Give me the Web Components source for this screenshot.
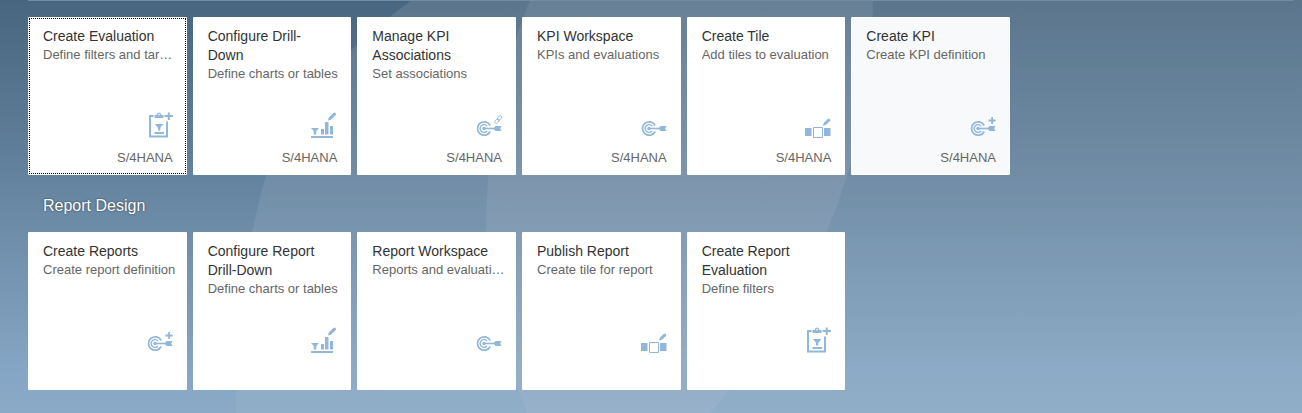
<!DOCTYPE html>
<html lang="en">
<head>
<meta charset="utf-8">
<title>Launchpad</title>
<style>
html, body { margin: 0; min-height: 100%; }
body { font-family: "Liberation Sans", Arial, sans-serif; background: #93b0ca; }
</style>
</head>
<body>
<launch-pad>
  <tile-group>
    <app-tile focused icon="board" system="S/4HANA" subtitle="Define filters and tar…">Create Evaluation</app-tile>
    <app-tile icon="chart" system="S/4HANA" subtitle="Define charts or tables">Configure Drill-Down</app-tile>
    <app-tile icon="target-link" system="S/4HANA" subtitle="Set associations">Manage KPI Associations</app-tile>
    <app-tile icon="target" system="S/4HANA" subtitle="KPIs and evaluations">KPI Workspace</app-tile>
    <app-tile icon="tiles" system="S/4HANA" subtitle="Add tiles to evaluation">Create Tile</app-tile>
    <app-tile hovered icon="target-plus" system="S/4HANA" subtitle="Create KPI definition">Create KPI</app-tile>
  </tile-group>
  <tile-group heading="Report Design">
    <app-tile icon="target-plus" subtitle="Create report definition">Create Reports</app-tile>
    <app-tile icon="chart" subtitle="Define charts or tables">Configure Report Drill-Down</app-tile>
    <app-tile icon="target" subtitle="Reports and evaluati…">Report Workspace</app-tile>
    <app-tile icon="tiles" subtitle="Create tile for report">Publish Report</app-tile>
    <app-tile icon="board" subtitle="Define filters">Create Report Evaluation</app-tile>
  </tile-group>
</launch-pad>
<script>
const target = '<g fill="none" stroke="currentColor"><path d="M15.200 13.500A6.700 6.700 0 1 0 15.200 19.500" stroke-width="1.700"/><path d="M12 14A3.900 3.900 0 1 0 12 19" stroke-width="1.400"/><path d="M9 16.500H21" stroke-width="1.600"/></g><circle cx="9" cy="16.500" r="1.700"/><path d="M18.500 16.500L20.500 14H26.500L25.200 16.500L26.500 19H20.500Z"/>';
const icons = {
  board: '<g fill="none" stroke="currentColor"><path d="M7.500 4H4V24.500H21V9.500" stroke-width="2"/><path d="M18.500 4H27M22.800 0.500V8" stroke-width="2"/><path d="M8.500 21H18" stroke-width="2"/></g><path d="M8.500 6V3H10.500Q11 .5 13 .5T15.500 3H17.500V6Z"/><circle cx="13" cy="2.600" r=".8" fill="#fff"/><path d="M8.800 12H17.500L14.300 15.800V18.500H12V15.800Z"/>',
  chart: '<path d="M1 24H23V26H1ZM1 16H9L6.300 19V22.500H3.700V19ZM11 17H14V22.500H11ZM15 10H18.500V22.500H15ZM20 14H23V22.500H20ZM18 8.500L18.800 5.500L23.500 .8H25.500L26.200 2.500L21 7.800Z"/>',
  target: target,
  'target-plus': target + '<path d="M22.200 5H24V7.600H26.600V9.400H24V12H22.200V9.400H19.500V7.600H22.200Z"/>',
  'target-link': target + '<g fill="none" stroke="currentColor" stroke-width=".9"><rect x="19.500" y="7.500" width="5" height="3" rx="1.500" transform="rotate(-50 22 9)"/><rect x="22" y="4.500" width="5" height="3" rx="1.500" transform="rotate(-50 24.500 6)"/></g>',
  tiles: '<path d="M1 16H7.500V24H1ZM20 16H26.500V24H20ZM19 13.500L19.800 10.800L24 6.800H25.800L26.500 8.500L21.800 12.900Z"/><path d="M9.500 15.500H18.500V25.500H9.500Z" fill="none" stroke="currentColor"/>'
};

customElements.define('launch-pad', class extends HTMLElement {
  constructor() {
    super();
    this.attachShadow({mode: 'open'}).innerHTML = `
      <style>
        :host { display: block; position: relative; isolation: isolate; overflow: hidden; min-height: 100vh; box-sizing: border-box; padding: 0 8px 23px 28px; background: linear-gradient(#48667f, #5e7d98 35%, #85a6c4 90%, #8aaac8); }
        .backdrop { position: absolute; inset: 0; z-index: -1; width: 100%; height: 100%; }
        .rule { height: 1px; margin-bottom: 16px; background: #6f8da3; }
      </style>
      <svg class="backdrop" viewBox="0 0 1302 413" preserveAspectRatio="xMinYMin slice" aria-hidden="true">
        <path d="M412 0Q300 80 266 175Q236 280 236 413H1302V0Z" fill="#b8c4cf" fill-opacity=".17"/>
        <path d="M530 0Q486 110 486 232Q488 320 527 413H710Q873 230 873 0Z" fill="#c0c5d8" fill-opacity=".14"/>
      </svg>
      <div class="rule"></div>
      <main><slot></slot></main>`;
  }
});

customElements.define('tile-group', class extends HTMLElement {
  constructor() {
    super();
    const heading = this.getAttribute('heading');
    this.attachShadow({mode: 'open'}).innerHTML = `
      <style>
        :host { display: block; }
        h2 { margin: 0; padding: 20px 15px 16px; color: #fff; font-size: 16px; line-height: 21px; font-weight: 400; text-shadow: 0 0 2px #000a; }
        .tiles { display: grid; grid-template-columns: repeat(6, minmax(0, 1fr)); gap: 6px; max-width: 982px; }
      </style>
      ${heading ? `<h2>${heading}</h2>` : ''}
      <div class="tiles"><slot></slot></div>`;
  }
});

customElements.define('app-tile', class extends HTMLElement {
  constructor() {
    super();
    const system = this.getAttribute('system');
    this.attachShadow({mode: 'open'}).innerHTML = `
      <style>
        :host { display: block; }
        a { display: flex; flex-direction: column; box-sizing: border-box; min-height: 158px; padding: 10px 14px 8px 15px; border-radius: 1px; background: #fff; color: #333; text-decoration: none; }
        :host([focused]) a { outline: 1px dotted #000; outline-offset: -2px; }
        :host([hovered]) a { background: #f8f9fb; border: 1px solid #fff; padding: 9px 13px 7px 14px; }
        h3 { margin: 0; padding-right: 8px; font-size: 14px; line-height: 19px; font-weight: 400; }
        p { margin: 0 -12px 0 0; color: #666; font-size: 13px; line-height: 18px; white-space: nowrap; overflow: hidden; text-overflow: ellipsis; }
        svg { display: block; width: 27px; height: 27px; margin: auto 0 10px auto; color: #91b8da; fill: currentColor; overflow: visible; }
        .system { height: 18px; color: #666; font-size: 13px; line-height: 18px; text-align: right; }
      </style>
      <a href="#">
        <h3><slot></slot></h3>
        <p>${this.getAttribute('subtitle')}</p>
        <svg viewBox="0 0 27 27" aria-hidden="true">${icons[this.getAttribute('icon')]}</svg>
        <div class="system">${system || ''}</div>
      </a>`;
  }
});
</script>
</body>
</html>
